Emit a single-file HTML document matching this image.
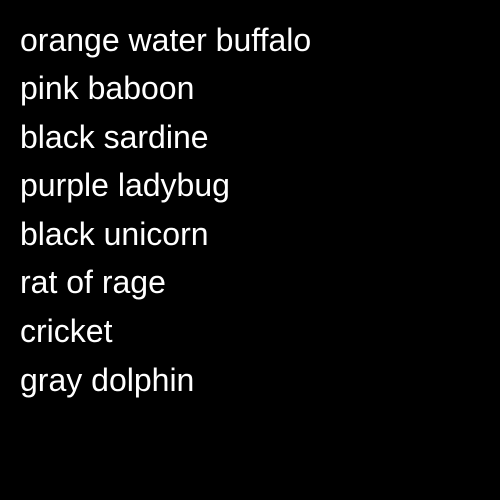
<!DOCTYPE html>
<html><head><style>
html,body{margin:0;padding:0;background:#000;width:500px;height:500px;overflow:hidden}
.w{padding:15.5px 0 0 20px;font-family:"Liberation Sans",Arial,sans-serif;font-size:32px;line-height:48.6px;color:#fff}
</style></head><body><div class="w">
<div>orange water buffalo</div>
<div>pink baboon</div>
<div>black sardine</div>
<div>purple ladybug</div>
<div>black unicorn</div>
<div>rat of rage</div>
<div>cricket</div>
<div>gray dolphin</div>
</div></body></html>
